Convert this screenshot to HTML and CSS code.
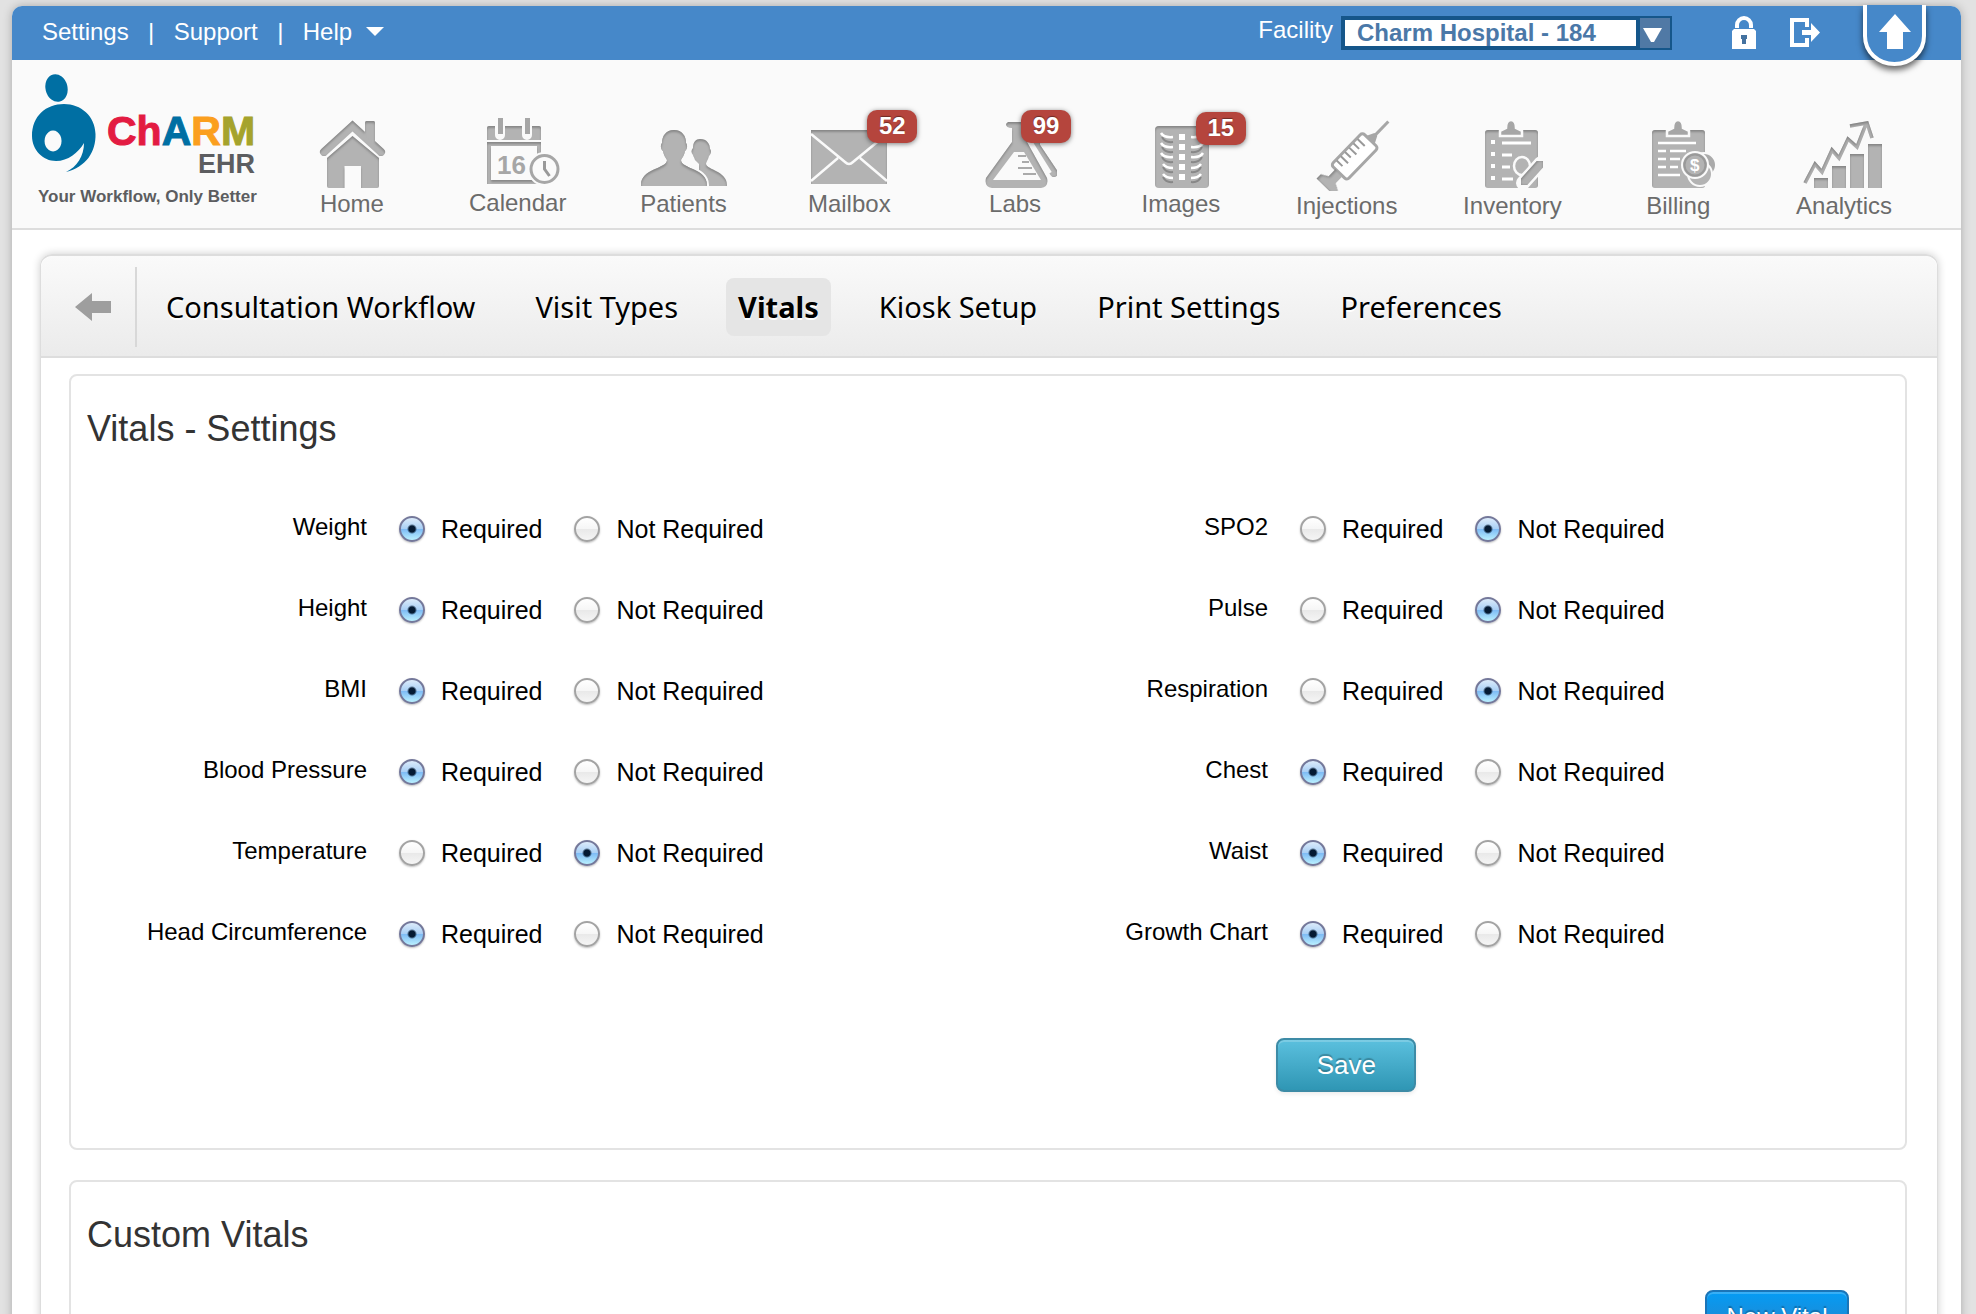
FILE: index.html
```html
<!DOCTYPE html>
<html lang="en">
<head>
<meta charset="utf-8">
<title>ChARM EHR - Vitals Settings</title>
<meta name="viewport" content="width=device-width, initial-scale=1">
<link rel="stylesheet" href="styles.css">
</head>
<body>
<svg class="defs" width="0" height="0" aria-hidden="true">
  <filter id="inset" x="-10%" y="-10%" width="120%" height="120%">
    <feOffset in="SourceAlpha" dx="0" dy="2" result="off"/>
    <feGaussianBlur in="off" stdDeviation="1" result="blur"/>
    <feComposite in="SourceAlpha" in2="blur" operator="out" result="edge"/>
    <feFlood flood-color="#555" flood-opacity=".6"/>
    <feComposite in2="edge" operator="in" result="shade"/>
    <feMerge><feMergeNode in="SourceGraphic"/><feMergeNode in="shade"/></feMerge>
  </filter>
</svg>
<div class="page">
  <div class="topbar">
    <nav class="toplinks" aria-label="Account">
      <a href="#">Settings</a><span class="sep">|</span><a href="#">Support</a><span class="sep">|</span><a href="#" class="help">Help <svg width="18" height="10" viewBox="0 0 18 10" aria-hidden="true"><path d="M0 0h18L9 9z" fill="#fff"/></svg></a>
    </nav>
    <div class="tools">
      <label for="facility">Facility</label>
      <span class="select">
        <select id="facility"><option>Charm Hospital - 184</option></select>
        <svg class="select-arrow" width="30" height="30" viewBox="0 0 30 30" aria-hidden="true"><path fill="#5079a5" d="M0 0h30v30H0z"/><path fill="#fff" d="M3 10h19l-8 14h-3z"/></svg>
      </span>
      <button class="tool lock" type="button" aria-label="Lock"><svg width="26" height="34" viewBox="0 0 26 34"><path d="M6 12V9a7 7 0 0 1 14 0v3" fill="none" stroke="#fff" stroke-width="4"/><path fill="#fff" d="M3 13h20l2 2v18H1V15z"/><path fill="#4472a0" d="M10 19h6v4h-1v5h-4v-5h-1z"/></svg></button>
      <button class="tool exit" type="button" aria-label="Sign out"><svg width="32" height="32" viewBox="0 0 32 32"><path fill="none" stroke="#fff" stroke-width="4" d="M18 10V3H3v25h15v-7"/><path fill="#fff" d="M13 13h9V6l9 9.500-9 9.500v-7h-9z"/></svg></button>
      <button class="tool up" type="button" aria-label="Scroll to top"><svg width="74" height="74" viewBox="0 0 74 74"><path d="M7 0v31c0 16 13 28 29.500 28S66 47 66 31V0" fill="#4688c9" stroke="#fff" stroke-width="4"/><path fill="#fff" d="M37 9l16 18h-8v17H29V27h-8z"/></svg></button>
    </div>
  </div>

  <header class="header">
    <a class="logo" href="#">
      <span class="brand">
        <svg width="64" height="98" viewBox="32 74 64 98" aria-hidden="true"><ellipse cx="56.500" cy="88" rx="11" ry="14" transform="rotate(-14 56.500 88)" fill="#006fa3"/><path fill="#006fa3" fill-rule="evenodd" d="M66 172C86 167 96 152 95.500 134 95 116 81 104 64 104 46 104 32 116 32 136c0 14 11 25 24 25 12 0 22-8 28-18 0 13-7 24-18 29zM53 130.500a8.500 10.500 0 1 0 .1 0z"/></svg>
        <span class="wordmark"><span class="charm"><span class="c-red">Ch</span><span class="c-blue">A</span><span class="c-orange">R</span><span class="c-olive">M</span></span><span class="ehr">EHR</span></span>
      </span>
      <span class="tagline">Your Workflow, Only Better</span>
    </a>
    <nav class="mainnav" aria-label="Main">
      <a href="#"><svg class="icon" viewBox="302 112 100 77"><g filter="url(#inset)"><path d="M324 152l28.500-26 28.500 26" fill="none" stroke="#b3b3b3" stroke-width="8" stroke-linecap="round" stroke-linejoin="miter"/><path fill="#b3b3b3" d="M365 122.500q0-1.500 1.500-1.500h7q1.500 0 1.500 1.500V144l-10-8z"/></g><path filter="url(#inset)" fill="#b3b3b3" d="M352.500 136l26.500 22v28q0 2-2 2h-16v-22h-16.500v22H329q-2 0-2-2v-28z"/></svg><span>Home</span></a>
      <a href="#"><svg class="icon icon-short" viewBox="468 112 100 76"><path filter="url(#inset)" fill="#b3b3b3" d="M489 126h50q2 0 2 2v12h-54v-12q0-2 2-2z"/><path fill="#fafafa" d="M495 118h10v17a5 5 0 0 1-10 0zM522 118h10v17a5 5 0 0 1-10 0z"/><path fill="#a6a6a6" d="M498 118h5v16h-5zM525 118h5v16h-5z"/><path filter="url(#inset)" fill="none" stroke="#b3b3b3" stroke-width="4" d="M489 144h50v38h-50z"/><text x="497" y="174" font-size="26" class="icon-text">16</text><circle cx="544.500" cy="169" r="17" fill="#fafafa"/><circle cx="544.500" cy="169" r="13.500" fill="#fafafa" stroke="#a6a6a6" stroke-width="3"/><path d="M544.500 161v8l5 7" fill="none" stroke="#999" stroke-width="3"/></svg><span>Calendar</span></a>
      <a href="#"><svg class="icon" viewBox="633 112 100 77"><path filter="url(#inset)" fill="#b3b3b3" d="M700 139c7 0 10 5 10 10 2 2 1 5-1 7-1 4-3 6-3 8 1 6 21 7 21 21v1h-28v-22l-4-4c-1-3-2-4-2-5-2-2-2-5 0-7 0-6 3-9 7-9z"/><path fill="#b3b3b3" stroke="#fafafa" stroke-width="4" paint-order="stroke" d="M674 130c8 0 12 6 12 13 2 2 1 7-1 8-1 5-3 7-4 9 0 9 26 8 26 25v1h-66v-1c0-17 26-16 26-25-1-2-3-4-4-9-2-1-3-6-1-8 0-7 4-13 12-13z"/><path filter="url(#inset)" fill="#b3b3b3" d="M674 130c8 0 12 6 12 13 2 2 1 7-1 8-1 5-3 7-4 9 0 9 26 8 26 25v1h-66v-1c0-17 26-16 26-25-1-2-3-4-4-9-2-1-3-6-1-8 0-7 4-13 12-13z"/></svg><span>Patients</span></a>
      <a href="#"><svg class="icon" viewBox="799 112 100 77"><path filter="url(#inset)" fill="#b3b3b3" d="M811 130h76v54h-76z"/><path fill="none" stroke="#fafafa" stroke-width="2.500" d="M811 134l34 28q4 4 8 0l34-28M811 181l27-23M887 181l-27-23"/></svg><span>Mailbox</span><b class="badge badge-mail">52</b></a>
      <a href="#"><svg class="icon" viewBox="964 112 100 77"><path filter="url(#inset)" d="M1030 138h5v8l18 27" fill="none" stroke="#b3b3b3" stroke-width="8" stroke-linecap="round"/><path d="M1029 141l20 32" stroke="#fafafa" stroke-width="4"/><path filter="url(#inset)" fill="#b3b3b3" d="M1007 122h20q2 3-1 6v14l20 36q2 9-6 10h-49q-8-1-6-10l26-36v-14q-6 0-6-4z"/><path fill="#fafafa" d="M1013 152h10l17 28h-48z"/><path stroke="#aaa" stroke-width="2" d="M1017 156h8M1021 162h7M1017 168h14M1022 174h13"/></svg><span>Labs</span><b class="badge badge-labs">99</b></a>
      <a href="#"><svg class="icon" viewBox="1130 112 100 77"><rect filter="url(#inset)" x="1154" y="126" width="54" height="62" rx="4" fill="#b3b3b3"/><path stroke="#fff" stroke-width="6" stroke-dasharray="6 4" d="M1181 134v46"/><path fill="none" stroke="#888" stroke-width="2" d="M1161 136q3 6 11 5M1161 146q3 6 11 5M1161 156q3 6 11 5M1162 166q3 6 10 5M1162 176q3 6 10 5M1201 146q-3 6-11 5M1201 156q-3 6-11 5M1200 166q-3 6-10 5M1200 176q-3 6-10 5" transform="translate(0 1)"/><path fill="none" stroke="#fff" stroke-width="2.500" d="M1160 133q3 5 12 4M1160 143q3 5 12 4M1160 153q3 5 12 4M1162 164q3 4 10 4M1162 174q3 4 10 4M1202 133q-3 5-12 4M1202 143q-3 5-12 4M1202 153q-3 5-12 4M1200 164q-3 4-10 4M1200 174q-3 4-10 4"/></svg><span>Images</span><b class="badge badge-images">15</b></a>
      <a href="#"><svg class="icon icon-tall" viewBox="1296 112 100 79"><g transform="translate(1354 156) rotate(-46)"><rect x="-23" y="-11" width="45" height="22" rx="3" fill="#fff" stroke="#a6a6a6" stroke-width="3"/><path fill="#a6a6a6" d="M22-6l8 4v4l-8 4zM-36-3h13v6h-13z"/><path fill="none" stroke="#a6a6a6" stroke-width="3" d="M28 0h20"/><path filter="url(#inset)" fill="#b3b3b3" d="M-43-12h6l4 7h10V5h-10l-4 7h-6z"/><path stroke="#999" stroke-width="2" d="M-16-10v8M-10-10v10M-4-10v8M2-10v10M8-10v8M14-10v10"/></g></svg><span>Injections</span></a>
      <a href="#"><svg class="icon icon-tall" viewBox="1461 112 100 79"><rect filter="url(#inset)" x="1484" y="130" width="53" height="58" rx="3" fill="#b3b3b3"/><path d="M1499 136v-5l6-3c0-5 2-8 5-8s5 3 5 8l6 3v5z" fill="#a6a6a6" stroke="#fafafa" stroke-width="2.500"/><path stroke="#fff" stroke-width="3" d="M1501 143h29M1501 155h10M1501 167h8M1501 179h11"/><path stroke="#fff" stroke-width="4" stroke-dasharray="4 8" d="M1492 140v44"/><ellipse cx="1521" cy="166" rx="8" ry="9" fill="#b3b3b3" stroke="#fafafa" stroke-width="2.500"/><path d="M1522 183l18-20" stroke="#fafafa" stroke-width="14" stroke-linecap="round"/><path filter="url(#inset)" d="M1522 183l18-20" stroke="#b0b0b0" stroke-width="9" stroke-linecap="round"/></svg><span>Inventory</span></a>
      <a href="#"><svg class="icon icon-tall" viewBox="1628 112 100 79"><rect filter="url(#inset)" x="1652" y="130" width="53" height="58" rx="3" fill="#b3b3b3"/><path d="M1667 136v-5l6-3c0-5 2-8 5-8s5 3 5 8l6 3v5z" fill="#a6a6a6" stroke="#fafafa" stroke-width="2.500"/><path stroke="#fff" stroke-width="2.500" d="M1658 143h38M1658 151h8M1670 151h16M1658 159h8M1670 159h10M1658 167h8M1670 167h8M1658 175h22"/><circle cx="1704" cy="165" r="12" fill="#aaa" stroke="#fafafa" stroke-width="2"/><circle cx="1700" cy="174" r="12" fill="#b3b3b3" stroke="#fafafa" stroke-width="2"/><circle cx="1695" cy="165" r="13" fill="#b3b3b3" stroke="#fafafa" stroke-width="2"/><circle cx="1695" cy="165" r="10.500" fill="none" stroke="#999" stroke-width="2"/><text x="1690" y="171" font-size="17" class="icon-text icon-text-light">$</text></svg><span>Billing</span></a>
      <a href="#"><svg class="icon icon-tall" viewBox="1794 112 100 79"><path filter="url(#inset)" fill="#b3b3b3" d="M1814 178h14v10h-14zM1832 166h14v22h-14zM1850 154h14v34h-14zM1868 144h14v44h-14z"/><path filter="url(#inset)" fill="none" stroke="#b0b0b0" stroke-width="3.500" d="M1805 183l10-19 7 8 10-22 7 8 9-19 9 8 9-23M1850 126l17-3 5 15"/></svg><span>Analytics</span></a>
    </nav>
  </header>

  <main class="panel">
    <nav class="tabs" aria-label="Encounter settings">
      <a class="back" href="#" aria-label="Back"><svg width="36" height="30" viewBox="0 0 36 30"><path fill="#9e9e9e" d="M0 15L17 1v8h19v12H17v8z"/></svg></a>
      <a class="tab" href="#">Consultation Workflow</a>
      <a class="tab" href="#">Visit Types</a>
      <a class="tab active" href="#" aria-current="page">Vitals</a>
      <a class="tab" href="#">Kiosk Setup</a>
      <a class="tab" href="#">Print Settings</a>
      <a class="tab" href="#">Preferences</a>
    </nav>

    <section class="card">
      <h2>Vitals - Settings</h2>
      <form>
        <div class="vitals">
          <div class="row" role="radiogroup" aria-labelledby="v1"><span class="name" id="v1">Weight</span><label><input type="radio" name="weight" checked>Required</label><label><input type="radio" name="weight">Not Required</label></div>
          <div class="row" role="radiogroup" aria-labelledby="v2"><span class="name" id="v2">Height</span><label><input type="radio" name="height" checked>Required</label><label><input type="radio" name="height">Not Required</label></div>
          <div class="row" role="radiogroup" aria-labelledby="v3"><span class="name" id="v3">BMI</span><label><input type="radio" name="bmi" checked>Required</label><label><input type="radio" name="bmi">Not Required</label></div>
          <div class="row" role="radiogroup" aria-labelledby="v4"><span class="name" id="v4">Blood Pressure</span><label><input type="radio" name="bp" checked>Required</label><label><input type="radio" name="bp">Not Required</label></div>
          <div class="row" role="radiogroup" aria-labelledby="v5"><span class="name" id="v5">Temperature</span><label><input type="radio" name="temp">Required</label><label><input type="radio" name="temp" checked>Not Required</label></div>
          <div class="row" role="radiogroup" aria-labelledby="v6"><span class="name" id="v6">Head Circumference</span><label><input type="radio" name="head" checked>Required</label><label><input type="radio" name="head">Not Required</label></div>
          <div class="row" role="radiogroup" aria-labelledby="v7"><span class="name" id="v7">SPO2</span><label><input type="radio" name="spo2">Required</label><label><input type="radio" name="spo2" checked>Not Required</label></div>
          <div class="row" role="radiogroup" aria-labelledby="v8"><span class="name" id="v8">Pulse</span><label><input type="radio" name="pulse">Required</label><label><input type="radio" name="pulse" checked>Not Required</label></div>
          <div class="row" role="radiogroup" aria-labelledby="v9"><span class="name" id="v9">Respiration</span><label><input type="radio" name="resp">Required</label><label><input type="radio" name="resp" checked>Not Required</label></div>
          <div class="row" role="radiogroup" aria-labelledby="v10"><span class="name" id="v10">Chest</span><label><input type="radio" name="chest" checked>Required</label><label><input type="radio" name="chest">Not Required</label></div>
          <div class="row" role="radiogroup" aria-labelledby="v11"><span class="name" id="v11">Waist</span><label><input type="radio" name="waist" checked>Required</label><label><input type="radio" name="waist">Not Required</label></div>
          <div class="row" role="radiogroup" aria-labelledby="v12"><span class="name" id="v12">Growth Chart</span><label><input type="radio" name="growth" checked>Required</label><label><input type="radio" name="growth">Not Required</label></div>
        </div>
        <button class="btn save" type="submit">Save</button>
      </form>
    </section>

    <section class="card">
      <h2>Custom Vitals</h2>
      <div class="actions"><button class="btn new" type="button">New Vital</button></div>
    </section>
  </main>
</div>
</body>
</html>
```
FILE: styles.css
```css
* { box-sizing: border-box; }

body {
  margin: 0;
  padding: 6px 15px 0 12px;
  height: 100vh;
  overflow: hidden;
  background: #e2e2e2;
  font-family: "Liberation Sans", Arial, sans-serif;
  font-size: 24px;
  line-height: 28px;
  color: #000;
}

a { color: inherit; text-decoration: none; }
button { font: inherit; cursor: pointer; }
.defs { position: absolute; }

.page {
  min-height: 100%;
  background: #fff;
  border-radius: 10px 10px 0 0;
  box-shadow: 0 0 10px rgba(0, 0, 0, .25);
}

/* Top bar */
.topbar {
  display: flex;
  justify-content: space-between;
  align-items: center;
  height: 54px;
  padding: 0 35px 0 30px;
  background: #4688c9;
  border-radius: 10px 10px 0 0;
  color: #fff;
}
.toplinks { display: flex; align-items: center; padding-bottom: 2px; }
.sep { width: 45px; text-align: center; }
.help { display: flex; align-items: center; gap: 14px; }
.tools { display: flex; align-items: center; }
.tools label { padding-bottom: 6px; }
.select { position: relative; margin-left: 8px; }
.select select {
  display: block;
  appearance: none;
  width: 331px;
  height: 34px;
  padding: 0 40px 0 12px;
  border: 4px solid #15568a;
  border-radius: 0;
  background: #fff;
  color: #4a78a8;
  font: bold 24px/26px "Liberation Sans", Arial, sans-serif;
}
.select-arrow {
  position: absolute;
  top: 2px;
  right: 2px;
  outline: 2px solid #15568a;
  box-shadow: -4px 0 0 #15568a;
  pointer-events: none;
}
.tool { display: block; padding: 0; border: 0; background: none; }
.tool svg { display: block; }
.lock { margin-left: 59px; }
.exit { margin-left: 32px; }
.up { margin: -2px -6px -20px 37px; align-self: flex-start; filter: drop-shadow(0 4px 3px rgba(0, 0, 0, .6)); }

/* Header */
.header {
  display: flex;
  border-bottom: 2px solid #ddd;
  background: #fafafa;
  padding-right: 34px;
}
.logo { width: 257px; height: 168px; padding: 14px 0 0 20px; flex: none; }
.brand { display: flex; gap: 11px; }
.wordmark { display: flex; flex-direction: column; align-items: flex-end; padding-top: 41px; font-weight: bold; }
.charm { font-size: 41px; line-height: 32px; -webkit-text-stroke: 1px; }
.ehr { font-size: 27px; line-height: 34px; color: #5c5d60; }
.c-red { color: #e31b42; }
.c-blue { color: #006fa3; }
.c-orange { color: #fb9f1e; }
.c-olive { color: #a5a32c; }
.tagline { display: block; padding-left: 6px; font-size: 17px; line-height: 31px; font-weight: bold; color: #5c5d60; white-space: nowrap; }

.mainnav { display: flex; flex: 1; padding-top: 52px; line-height: 30px; }
.mainnav a {
  position: relative;
  flex: 1 1 0;
  display: flex;
  flex-direction: column;
  align-items: center;
  color: #6b6b6b;
}
.icon { width: 100px; height: 77px; }
.icon-short { height: 76px; }
.icon-tall { height: 79px; }
.icon-text { font-family: "Liberation Sans", Arial, sans-serif; font-weight: bold; fill: #a6a6a6; }
.icon-text-light { fill: #fff; }
.badge {
  position: absolute;
  top: -2px;
  width: 50px;
  height: 33px;
  border-radius: 10px;
  background: #b5453d;
  box-shadow: 0 1px 5px rgba(0, 0, 0, .5);
  color: #fff;
  font-size: 24px;
  font-weight: bold;
  line-height: 31px;
  text-align: center;
  text-shadow: 0 -1px 1px rgba(0, 0, 0, .4);
}
.badge-mail { left: calc(50% + 18px); }
.badge-labs { left: calc(50% + 6px); }
.badge-images { left: calc(50% + 15px); top: 0; }

/* Panel */
.panel {
  margin: 24px 23px 0 28px;
  border: 2px solid #ddd;
  border-width: 2px 1px 0;
  border-radius: 12px 12px 0 0;
  box-shadow: 0 0 8px rgba(0, 0, 0, .2);
  padding-bottom: 30px;
}
.tabs {
  display: flex;
  align-items: center;
  gap: 36px;
  height: 102px;
  padding-top: 2px;
  border-bottom: 2px solid #ddd;
  border-radius: 12px 12px 0 0;
  background: linear-gradient(#fafafa, #ebebeb);
  font-family: "Noto Sans", sans-serif;
  font-size: 29px;
  line-height: 40px;
  white-space: nowrap;
}
.back {
  display: flex;
  align-items: center;
  height: 80px;
  width: 96px;
  padding-left: 34px;
  margin-right: -19px;
  border-right: 2px solid #d8d8d8;
}
.tab { padding: 9px 12px; border-radius: 8px; text-shadow: 0 2px 0 #fff; }
.active { background: #e5e5e5; font-weight: bold; }

.card {
  margin: 16px 30px 30px 28px;
  padding: 32px 16px 56px;
  border: 2px solid #e3e3e3;
  border-radius: 8px;
  background: #fff;
}
h2 { margin: 0; font-size: 36px; line-height: 42px; font-weight: normal; color: #333; }
.vitals {
  display: grid;
  grid-template: repeat(6, 81px) / 1fr 1fr;
  grid-auto-flow: column;
  margin-top: 38px;
}
.row { display: flex; align-items: center; gap: 32px; }
.row label { display: flex; align-items: center; gap: 16px; font-size: 25px; }
.name { width: 280px; padding-bottom: 4px; text-align: right; }

input[type="radio"] {
  appearance: none;
  width: 26px;
  height: 26px;
  margin: 0;
  border: 2px solid #a3a3a3;
  border-radius: 50%;
  background: linear-gradient(#fff 0%, #f6f6f6 48%, #e9e9e9 52%, #f5f5f5 100%);
  box-shadow: 0 1px 2px rgba(0, 0, 0, .25);
}
input[type="radio"]:checked {
  border-color: #74789a;
  background:
    radial-gradient(circle, #041a33 0 3px, transparent 5px),
    linear-gradient(#dcebfa 0%, #a9d0f6 48%, #7fbcf5 52%, #b9f0ff 100%);
}

.btn {
  display: block;
  border-radius: 8px;
  color: #fff;
  text-shadow: 0 -2px 1px rgba(0, 0, 0, .25);
}
.save {
  width: 140px;
  height: 54px;
  margin: 64px 0 0 66%;
  border: 2px solid #3d8ba6;
  background: linear-gradient(#5bc0de, #2f96b4);
  box-shadow: inset 0 2px 0 rgba(255, 255, 255, .2), 0 2px 4px rgba(0, 0, 0, .08);
  font-size: 26px;
}
.actions { display: flex; justify-content: flex-end; padding: 34px 40px 0 0; }
.new {
  width: 144px;
  height: 54px;
  border: 2px solid #1b75b8;
  background: linear-gradient(#049cf5, #2f7fc0);
  box-shadow: inset 0 2px 0 rgba(255, 255, 255, .2);
}
```
